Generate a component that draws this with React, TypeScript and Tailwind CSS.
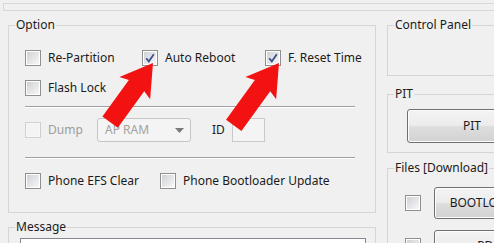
import React from 'react';

const font = { fontFamily: '"Noto Sans", "Open Sans", sans-serif' };

function Check({ checked, disabled }: { checked?: boolean; disabled?: boolean }) {
  return (
    <span
      className={`flex h-4 w-4 shrink-0 items-center justify-center border ${
        disabled ? 'border-[#cfcfcf] bg-[#f7f7f7]' : 'border-[#8e8f8f] bg-white'
      }`}
    >
      <span
        className={`flex h-[12px] w-[12px] items-center justify-center ${
          disabled ? 'bg-[#f3f3f3]' : 'bg-gradient-to-br from-[#cfd2d6] to-[#f7f7f7]'
        }`}
      >
        {checked && (
          <svg width="12" height="12" viewBox="0 0 12 12">
            <path d="M2.2 6.2 L4.8 9.4 L9.8 2.2" fill="none" stroke="#3b4f8f" strokeWidth="1.8" />
          </svg>
        )}
      </span>
    </span>
  );
}

function CheckLabel({ label, checked, disabled, width }: { label: string; checked?: boolean; disabled?: boolean; width: string }) {
  return (
    <div className={`flex items-center gap-[7px] ${width}`}>
      <Check checked={checked} disabled={disabled} />
      <span className={`whitespace-nowrap text-[12px] leading-4 ${disabled ? 'text-[#9d9d9d]' : 'text-[#1b1b1b]'}`}>{label}</span>
    </div>
  );
}

function Legend({ children }: { children: React.ReactNode }) {
  return <legend className="ml-[6px] whitespace-nowrap px-[1px] text-[12px] leading-4 text-[#1b1b1b]">{children}</legend>;
}

function WinButton({ label, width }: { label: string; width: string }) {
  return (
    <button
      className={`${width} whitespace-nowrap rounded-[3px] border border-[#707070] bg-[linear-gradient(to_bottom,#f4f4f4_0%,#ececec_48%,#dedede_52%,#d2d2d2_100%)] text-[12px] text-[#1b1b1b] shadow-[inset_0_0_0_1px_#fcfcfc]`}
    >
      {label}
    </button>
  );
}

function Separator() {
  return <div className="h-[2px] w-[330px] border-t border-[#a0a0a0] border-b border-b-white" />;
}

export default function App() {
  return (
    <div className="relative h-[243px] w-[494px] overflow-hidden bg-[#f0f0f0]" style={font}>
      {/* top frame remnant */}
      <div className="ml-[3px] mt-[3px] h-[8px] border-l border-t border-b border-[#d8d8d8]" />

      <div className="mt-[6px] flex">
        {/* left column */}
        <div className="ml-[8px] w-[368px] shrink-0">
          <fieldset className="h-[196px] border border-[#d5d5d5]">
            <Legend>Option</Legend>
            <div className="pl-4 pt-[17px]">
              <div className="flex h-4 items-center">
                <CheckLabel label="Re-Partition" width="w-[117px]" />
                <CheckLabel label="Auto Reboot" checked width="w-[123px]" />
                <CheckLabel label="F. Reset Time" checked width="w-[110px]" />
              </div>
              <div className="mt-[14px] flex h-4 items-center">
                <CheckLabel label="Flash Lock" width="w-[117px]" />
              </div>
              <div className="mt-[10px]">
                <Separator />
              </div>
              <div className="mt-[10px] flex h-6 items-center">
                <CheckLabel label="Dump" disabled width="w-[72px]" />
                <div className="flex h-6 w-[94px] items-center justify-between rounded-[3px] border border-[#c6c6c6] bg-[#f4f4f4] pl-[7px] pr-[6px]">
                  <span className="text-[12px] text-[#a2a2a2]">AP RAM</span>
                  <svg width="9" height="5" viewBox="0 0 9 5">
                    <path d="M0 0 L9 0 L4.5 5 Z" fill="#7a7a7a" />
                  </svg>
                </div>
                <span className="ml-[21px] text-[12px] text-[#1b1b1b]">ID</span>
                <div className="ml-[7px] h-6 w-[33px] border border-[#c9c9c9] bg-[#f4f4f4]" />
              </div>
              <div className="mt-[15px]">
                <Separator />
              </div>
              <div className="mt-[14px] flex h-4 items-center">
                <CheckLabel label="Phone EFS Clear" width="w-[135px]" />
                <CheckLabel label="Phone Bootloader Update" width="w-[200px]" />
              </div>
            </div>
          </fieldset>

          <fieldset className="mt-[6px] h-[60px] border border-[#d5d5d5]">
            <Legend>Message</Legend>
            <div className="pl-[11px] pt-[3px]">
              <div className="h-[40px] w-[346px] border border-[#828790] bg-white" />
            </div>
          </fieldset>
        </div>

        {/* right column */}
        <div className="ml-[11px] w-[180px] shrink-0">
          <fieldset className="h-[59px] border border-[#d5d5d5]">
            <Legend>Control Panel</Legend>
          </fieldset>

          <fieldset className="mt-[10px] h-[67px] border border-[#d5d5d5]">
            <Legend>PIT</Legend>
            <div className="flex pl-[19px] pt-[7px]">
              <WinButton label="PIT" width="h-[34px] w-[130px]" />
            </div>
          </fieldset>

          <fieldset className="mt-[7px] h-[120px] border border-[#d5d5d5]">
            <Legend>Files [Download]</Legend>
            <div className="pl-[17px] pt-[11px]">
              <div className="flex items-center gap-[13px]">
                <Check />
                <WinButton label="BOOTLOADER" width="h-[32px] w-[110px]" />
              </div>
              <div className="mt-[11px] flex items-center gap-[13px]">
                <Check />
                <WinButton label="PDA" width="h-[32px] w-[110px]" />
              </div>
            </div>
          </fieldset>
        </div>
      </div>

      {/* red annotation arrows */}
      <svg className="pointer-events-none absolute left-0 top-0" width="494" height="243" viewBox="0 0 494 243">
        <polygon
          points="0,0 19,31 9.5,28 9.5,73 -9.5,73 -9.5,28 -19,31"
          fill="#f21212"
          transform="translate(153 63) rotate(36)"
        />
        <polygon
          points="0,0 19,31 9.5,28 9.5,77 -9.5,77 -9.5,28 -19,31"
          fill="#f21212"
          transform="translate(279 63) rotate(36)"
        />
      </svg>
    </div>
  );
}
